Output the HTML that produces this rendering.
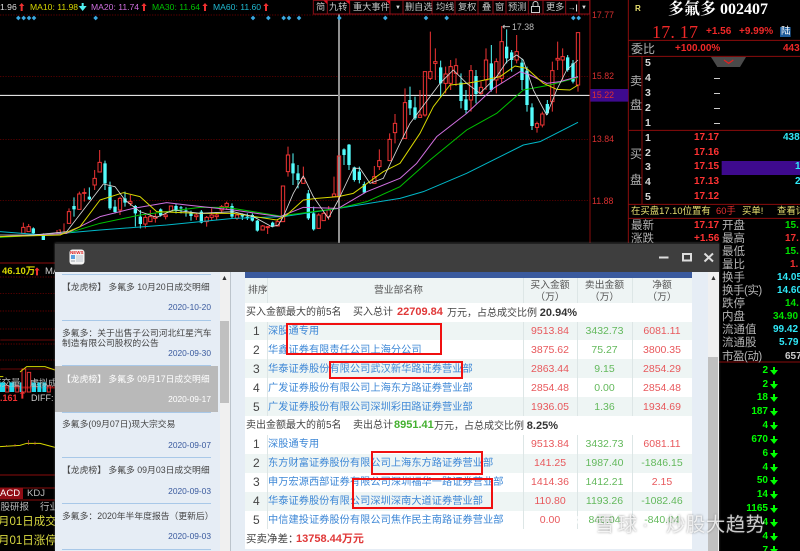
<!DOCTYPE html>
<html><head><meta charset="utf-8"><style>
html,body{margin:0;padding:0;background:#000}
#p{position:relative;width:800px;height:551px;overflow:hidden;background:#000;font-family:"Liberation Sans","Noto Sans CJK SC",sans-serif;font-size:11px}
.a{position:absolute;white-space:nowrap;line-height:1}
.b{position:absolute}
.l{color:#b4b4b4;font-size:11.5px}
.tb{color:#c8c8c8;font-size:9.2px;top:3px}
.ma{font-size:8.6px;top:3px}
.ax{left:592px;color:#d83030;font-size:8.8px}
.bk{color:#ff3333;font-size:10px;font-weight:bold;left:694px}
.n{color:#d8d8d8;font-size:10.5px;font-weight:bold;left:645px}
.g{color:#00ff00;font-size:10px;font-weight:bold;text-align:right;left:720px;width:48px}
.ti{font-size:8.8px;color:#444}
.d{font-size:8.4px;color:#3a5a9e;left:130px;width:81px;text-align:right}
.m{font-size:10.2px;letter-spacing:.05px;color:#3d87d6;left:268px}
.r{font-size:12px;color:#444;left:253px}
.v{font-size:10.5px;text-align:center}
.bu{color:#e8585c;left:523px;width:54px}
.se{color:#63b95c;left:577px;width:55px}
.ne{color:#e8585c;left:632px;width:60px}
.row{position:absolute;left:245px;width:447px}
.box{position:absolute;border:2px solid #f01010;box-sizing:border-box}
.h{font-size:9.8px;color:#555;text-align:center}
.wm{color:rgba(255,255,255,.78);text-shadow:0 0 2px rgba(70,70,70,.6);font-size:19.5px;top:516px}
</style></head><body><div id="p">

<svg class="b" style="left:0;top:0" width="800" height="551" viewBox="0 0 2400 1653" fill="none">
<defs>
<path id="up" d="M0 -12l8 9h-5v15h-6v-15h-5z"/>
<path id="dn" d="M-3 -12h6v9h9l-12 15-12-15h9z"/>
</defs>
<g stroke="#7a0000" stroke-width="2" stroke-dasharray="4 4">
<path d="M0 45H1770M0 229H1770M0 418H1770M0 602H1770"/>
<path d="M0 831H165M0 880H165M0 933H165M0 987H165M0 1032H165M0 1080H165"/>
</g>
<path d="M0 286H1770" stroke="#fff" stroke-width="3"/>
<path d="M1017 42V760" stroke="#909090" stroke-width="6"/>
<!-- red wicks and bodies -->
<path stroke="#f03434" stroke-width="3" d="M70 668V682M65 682H75V700H65ZM86 672V680M81 680H91V695H81ZM176 690H181V705H171V690M192 670V700M207 625V635M202 635H212V670H202ZM238 575V582M233 582H243V628H233ZM253 565V578M248 578H258V580H248ZM253 580V605M284 510V535M279 535H289V555H279ZM284 555V570M299 450V487M294 487H304V516H294ZM360 590V595M355 595H365V630H355ZM360 630V645M391 585V605M386 605H396V610H386ZM391 610V618M436 645V652M431 652H441V672H431ZM436 672V685M451 630V650M446 650H456V665H446ZM466 640V650M461 650H471V655H461ZM466 655V668M497 640V645M492 645H502V650H492ZM497 650V658M513 618H518V636H508V618ZM589 640V645M584 645H594V650H584ZM589 650V660M620 648V652M615 652H625V665H615ZM620 665V680M635 625V645M630 645H640V652H630ZM635 652V660M650 640V645M645 645H655V650H645ZM650 650V660M665 615V620M660 620H670V630H660ZM665 630V640M680 605V610M675 610H685V620H675ZM680 620V630M711 640V645M706 645H716V655H706ZM711 655V660M788 675V678M783 678H793V690H783ZM803 678V680M798 680H808V683H798ZM803 683V702M833 660V665M828 665H838V678H828ZM844 558H854V665H844ZM864 440V465M859 465H869V515H859ZM864 515V530M910 500V535M905 535H915V550H905ZM956 640V645M951 645H961V685H951ZM971 635V640M966 640H976V662H966ZM986 618V630M981 630H991V650H981ZM986 650V660M1002 530V582M997 582H1007V590H997ZM1012 468H1022V590H1012ZM1017 590V600M1123 498V530M1118 530H1128V550H1118ZM1138 448V482M1133 482H1143V500H1133ZM1138 500V510M1169 400V418M1164 418H1174V482H1164ZM1185 342V370M1180 370H1190V398H1180ZM1185 398V430M1215 265V308M1210 308H1220V415H1210ZM1260 270V345M1255 345H1265V352H1255ZM1275 215H1280V345H1270V215ZM1275 345V350M1291 95V215M1286 215H1296V235H1286ZM1291 235V240M1306 145V185M1301 185H1311V190H1301ZM1306 190V240M1337 200V222M1332 222H1342V250H1332ZM1337 250V280M1352 180V200M1347 200H1357V250H1347ZM1352 250V270M1368 175V197M1363 197H1373V220H1363ZM1368 220V258M1413 195V212M1408 212H1418V300H1408ZM1413 300V335M1443 245V262M1438 262H1448V280H1438ZM1443 280V285M1458 145V180M1453 180H1463V240H1453ZM1458 240V270M1489 175V185M1484 185H1494V240H1484ZM1489 240V280M1505 78V125M1500 125H1510V235H1500ZM1505 235V250M1550 105V155M1545 155H1555V180H1545ZM1550 180V190M1611 365V371M1606 371H1616V382H1606ZM1611 382V398M1627 335V342M1622 342H1632V375H1622ZM1627 375V382M1657 185V212M1652 212H1662V305H1652ZM1657 305V335M1673 125V175M1668 175H1678V180H1668ZM1673 180V210M1688 145V170M1683 170H1693V180H1683ZM1688 180V240M1729 98H1739V255H1729ZM1734 255V275"/>
<!-- cyan wicks -->
<path stroke="#54fcfc" stroke-width="3" d="M100 682V705M130 700V720M222 592V650M268 562V600M315 482V570M330 545V630M345 600V640M375 575V620M406 615V680M421 630V685M482 625V650M528 612V640M543 618V640M558 622V650M573 632V662M604 630V670M696 610V655M727 640V660M742 640V660M757 640V665M772 660V695M818 665V682M879 460V555M894 495V565M925 570V660M941 620V692M1032 445V495M1047 432V510M1063 500V545M1078 500V550M1093 545V580M1230 260V345M1245 290V360M1322 182V290M1383 220V325M1398 270V340M1428 210V310M1474 135V275M1520 88V190M1535 150V215M1566 175V270M1581 200V335M1596 310V390M1642 300V345M1703 165V215M1719 180V250"/>
<path fill="#54fcfc" d="M95 685h10v15h-10zM125 705h10v15h-10zM217 618h10v10h-10zM263 590h10v8h-10zM310 490h10v60h-10zM325 560h10v65h-10zM340 620h10v16h-10zM370 595h10v13h-10zM401 618h10v22h-10zM416 650h10v22h-10zM477 628h10v18h-10zM523 618h10v12h-10zM538 622h10v3h-10zM553 630h10v2h-10zM568 640h10v8h-10zM599 635h10v33h-10zM691 618h10v32h-10zM722 645h10v5h-10zM737 650h10v5h-10zM752 645h10v17h-10zM767 662h10v30h-10zM813 668h10v12h-10zM874 490h10v30h-10zM889 520h10v20h-10zM920 580h10v75h-10zM936 640h10v48h-10zM1027 448h10v17h-10zM1042 434h10v61h-10zM1058 502h10v38h-10zM1073 515h10v25h-10zM1088 552h10v26h-10zM1225 300h10v25h-10zM1240 322h10v33h-10zM1317 202h10v48h-10zM1378 248h10v55h-10zM1393 298h10v32h-10zM1423 228h10v54h-10zM1469 190h10v80h-10zM1515 140h10v35h-10zM1530 157h10v23h-10zM1561 188h10v52h-10zM1576 212h10v103h-10zM1591 322h10v56h-10zM1637 312h10v28h-10zM1698 172h10v38h-10zM1714 190h10v55h-10z"/>
<!-- MA lines -->
<g stroke-width="3" stroke-linejoin="round" fill="none">
<path stroke="#00b8c8" d="M0 695L130 705 300 690 500 675 700 655 850 650 1015 625 1200 595 1270 575 1400 520 1570 435 1620 425 1734 367"/>
<path stroke="#00c000" d="M0 712L200 700 300 670 420 645 600 622 680 622 840 648 1015 625 1100 605 1200 560 1290 480 1400 390 1490 340 1570 270 1650 255 1734 232"/>
<path stroke="#d070e0" d="M0 710L200 700 300 650 400 625 500 608 560 615 700 630 840 650 910 622 1015 625 1100 575 1200 535 1250 490 1310 410 1400 340 1480 265 1560 215 1590 225 1640 250 1680 245 1734 230"/>
<path stroke="#d8d800" d="M0 710L180 705 240 680 300 600 370 578 420 590 470 635 600 640 700 640 830 660 860 645 910 600 950 595 1015 590 1060 580 1150 515 1200 490 1260 400 1300 320 1350 255 1400 250 1440 243 1500 230 1545 198 1580 205 1630 250 1670 268 1710 270 1734 255"/>
<path stroke="#d8d8d8" stroke-width="2.5" d="M0 705L100 705 200 695 250 630 310 552 345 560 375 600 420 635 470 652 520 630 600 640 700 635 760 650 815 680 835 675 850 650 880 580 910 528 940 590 985 655 1015 600 1060 505 1080 505 1110 550 1150 535 1200 430 1230 370 1275 310 1320 250 1360 210 1400 250 1440 280 1490 230 1520 185 1550 165 1570 180 1600 270 1640 345 1670 270 1700 210 1734 180"/>
</g>
<!-- diamonds -->
<path fill="#3aa8e0" d="M55 47l7 7-7 7-7-7zM71 47l7 7-7 7-7-7zM87 47l7 7-7 7-7-7zM102 47l7 7-7 7-7-7zM287 47l7 7-7 7-7-7zM759 47l7 7-7 7-7-7zM805 47l7 7-7 7-7-7zM851 47l7 7-7 7-7-7zM867 47l7 7-7 7-7-7zM897 47l7 7-7 7-7-7zM1018 47l7 7-7 7-7-7zM1156 47l7 7-7 7-7-7zM1278 47l7 7-7 7-7-7zM1340 47l7 7-7 7-7-7zM1720 47l7 7-7 7-7-7zM1736 47l7 7-7 7-7-7z"/>
<!-- top arrows -->
<g fill="#f03030"><use href="#up" x="65" y="21"/><use href="#up" x="432" y="21"/><use href="#up" x="615" y="21"/><use href="#up" x="798" y="21"/><use href="#up" x="111" y="814"/><use href="#up" x="67" y="1184"/></g>
<use href="#dn" x="248" y="21" fill="#50f0f0"/>
<!-- 17.38 marker -->
<path stroke="#bbb" stroke-width="3" d="M1508 80H1530M1508 80l6-5M1508 80l6 5"/>
<!-- axis and panel lines -->
<g stroke="#8a0c0c" stroke-width="3">
<path d="M1770 0V730M1885 0V1653"/>
<path d="M1885 121H2400M1885 169H2400M1885 391H2400M1885 613H2400M1885 655H2400M1926 170V612"/>
<path d="M0 789H165M0 1161H165M0 1164H165M0 1425H165M0 1464H165M0 1500H165M1890 1086H2400"/>
</g>
<path stroke="#8a0c0c" stroke-width="2" d="M1 1107H165M1 1020H165"/>
<!-- toolbar borders -->
<path stroke="#8a1018" stroke-width="3" d="M940 1H1769V42H940ZM982 1V42M1049 1V42M1170 1V42M1209 1V42M1296 1V42M1365 1V42M1434 1V42M1479 1V42M1518 1V42M1585 1V42M1629 1V42M1697 1V42M1737 1V42"/>
<path fill="#e01020" d="M970 1h12v12zM1035 1h14v12zM1157 1h13v12z"/>
<!-- lower-left bits -->
<g stroke="#e03030" stroke-width="3"><path d="M17 1157h9v19h-9zM47 1157h9v19h-9zM66 1107h11v69h-11zM82 1117h10v59h-10zM142 1157h9v19h-9z"/></g>
<path fill="#20d8ec" d="M0 1147h15v29H0zM28 1147h15v29H28zM59 1147h5v29h-5zM95 1147h13v29H95zM112 1147h12v29h-12zM127 1147h12v29h-12z"/>
<path stroke="#d8d800" stroke-width="3" d="M60 1116L80 1100 135 1100 165 1110M0 1130H10M0 1340L60 1336 80 1330 120 1330 165 1342"/>
<path stroke="#c85050" stroke-width="2" d="M20 1340V1335M45 1340V1332M85 1335V1320M105 1335V1325"/>
<path fill="#900c14" d="M0 1464h69v33H0z"/>
<!-- right panel purple -->
<path fill="#3e0a8e" d="M1771 267h114v38h-114zM2165 483h235v42h-235z"/>
<path fill="#4a4a4a" d="M2133 171h105l-18 30h-68z"/>
<path stroke="#e02020" stroke-width="4" fill="none" d="M2172 180l14 10 14-10"/>
<path fill="#1c5a98" d="M2340 81h32v30h-32z"/>
<!-- green down arrows -->
<g fill="#00ff00"><use href="#dn" x="2322" y="1113"/><use href="#dn" x="2322" y="1155"/><use href="#dn" x="2322" y="1194"/><use href="#dn" x="2322" y="1236"/><use href="#dn" x="2322" y="1278"/><use href="#dn" x="2322" y="1320"/><use href="#dn" x="2322" y="1362"/><use href="#dn" x="2322" y="1404"/><use href="#dn" x="2322" y="1443"/><use href="#dn" x="2322" y="1485"/><use href="#dn" x="2322" y="1527"/><use href="#dn" x="2322" y="1569"/><use href="#dn" x="2322" y="1611"/><use href="#dn" x="2322" y="1650"/></g>
</svg>

<!-- top MA text -->
<span class="a ma" style="left:0;color:#ddd">1.96</span>
<span class="a ma" style="left:30px;color:#d8d800">MA10: 11.98</span>
<span class="a ma" style="left:91px;color:#d070e0">MA20: 11.74</span>
<span class="a ma" style="left:152px;color:#00c000">MA30: 11.64</span>
<span class="a ma" style="left:213px;color:#20b8d0">MA60: 11.60</span>
<span class="a" style="left:512px;top:23px;color:#bbb;font-size:8.8px">17.38</span>

<!-- toolbar -->
<span class="a tb" style="left:316px">简</span><span class="a tb" style="left:329px">九转</span><span class="a tb" style="left:353px">重大事件</span>
<span class="a" style="left:395px;top:5px;color:#ddd;font-size:6px">▼</span>
<span class="a tb" style="left:405px">删自选</span><span class="a tb" style="left:436px">均线</span><span class="a tb" style="left:458px">复权</span>
<span class="a tb" style="left:482px">叠</span><span class="a tb" style="left:495px">窗</span><span class="a tb" style="left:508px">预测</span>
<span class="a tb" style="left:546px">更多</span>
<svg class="b" style="left:530px;top:1px" width="12" height="12" fill="none" stroke="#ccc" stroke-width="1"><rect x="1.5" y="5.5" width="8" height="6"/><path d="M3 5V3a2.500 2.500 0 0 1 5 0v2"/></svg>
<span class="a" style="left:568px;top:4px;color:#eee;font-size:7.5px;font-weight:bold">→|</span>
<span class="a" style="left:581px;top:5px;color:#ddd;font-size:6px">▼</span>

<!-- axis labels -->
<span class="a ax" style="top:11px">17.77</span>
<span class="a ax" style="top:72px">15.82</span>
<span class="a ax" style="top:91px;color:#e03030">15.22</span>
<span class="a ax" style="top:135px">13.84</span>
<span class="a ax" style="top:197px">11.88</span>

<!-- right panel -->
<span class="a" style="left:635px;top:5px;color:#e8e070;font-size:8px;font-weight:bold">R</span>
<span class="a" style="left:668px;top:2px;color:#fff;font-size:16px;font-family:'Liberation Serif','Noto Serif CJK SC',serif;font-weight:bold">多氟多 002407</span>
<span class="a" style="left:652px;top:23px;color:#f02828;font-size:18px;font-family:'Liberation Serif',serif;letter-spacing:.2px">17. 17</span>
<span class="a" style="left:706px;top:27px;color:#f02828;font-size:10px;font-weight:bold">+1.56</span>
<span class="a" style="left:739px;top:27px;color:#f02828;font-size:10px;font-weight:bold">+9.99%</span>
<span class="a" style="left:781px;top:27px;color:#fff;font-size:9.500px">陆</span>
<span class="a l" style="left:631px;top:43px;font-size:12px">委比</span>
<span class="a" style="left:675px;top:44px;color:#f02828;font-size:10px;font-weight:bold">+100.00%</span>
<span class="a" style="left:783px;top:44px;color:#f02828;font-size:10px;font-weight:bold">443</span>
<span class="a l" style="left:630px;top:75px;font-size:12px">卖</span><span class="a l" style="left:630px;top:99px;font-size:12px">盘</span>
<span class="a l" style="left:630px;top:148px;font-size:12px">买</span><span class="a l" style="left:630px;top:174px;font-size:12px">盘</span>
<span class="a n" style="top:58px">5</span><span class="a n" style="top:73px">4</span><span class="a n" style="top:88px">3</span><span class="a n" style="top:103px">2</span><span class="a n" style="top:118px">1</span>
<span class="a n" style="top:133px">1</span><span class="a n" style="top:148px">2</span><span class="a n" style="top:162px">3</span><span class="a n" style="top:177px">4</span><span class="a n" style="top:192px">5</span>
<span class="b" style="left:714px;top:78px;width:6px;height:1px;background:#ccc"></span><span class="b" style="left:714px;top:93px;width:6px;height:1px;background:#ccc"></span><span class="b" style="left:714px;top:108px;width:6px;height:1px;background:#ccc"></span><span class="b" style="left:714px;top:123px;width:6px;height:1px;background:#ccc"></span>
<span class="a bk" style="top:133px">17.17</span><span class="a bk" style="top:148px">17.16</span><span class="a bk" style="top:162px">17.15</span><span class="a bk" style="top:177px">17.13</span><span class="a bk" style="top:192px">17.12</span>
<span class="a" style="left:783px;top:133px;color:#30e8f8;font-size:10px;font-weight:bold">438</span>
<span class="a" style="left:795px;top:162px;color:#30e8f8;font-size:10px;font-weight:bold">1</span>
<span class="a" style="left:795px;top:177px;color:#30e8f8;font-size:10px;font-weight:bold">2</span>
<span class="a" style="left:631px;top:206px;color:#e8e070;font-size:9.4px">在买盘17.10位置有</span>
<span class="a" style="left:716px;top:206px;color:#e83030;font-size:9.4px">60手</span>
<span class="a" style="left:742px;top:206px;color:#e8e070;font-size:9.4px">买单!</span>
<span class="a" style="left:777px;top:206px;color:#e8e070;font-size:9.4px">查看详</span>
<span class="a l" style="left:631px;top:221px">最新</span><span class="a bk" style="top:221px">17.17</span><span class="a l" style="left:722px;top:221px">开盘</span><span class="a" style="left:785px;top:221px;color:#00e000;font-size:10px;font-weight:bold">15.</span>
<span class="a l" style="left:631px;top:234px">涨跌</span><span class="a bk" style="top:234px">+1.56</span><span class="a l" style="left:722px;top:234px">最高</span><span class="a" style="left:785px;top:234px;color:#f03030;font-size:10px;font-weight:bold">17.</span>
<span class="a l" style="left:722px;top:247px">最低</span><span class="a" style="left:785px;top:247px;color:#00e000;font-size:10px;font-weight:bold">15.</span>
<span class="a l" style="left:722px;top:260px">量比</span><span class="a" style="left:790px;top:260px;color:#f03030;font-size:10px;font-weight:bold">1.</span>
<span class="a l" style="left:722px;top:273px">换手</span><span class="a" style="left:777px;top:273px;color:#30e8f8;font-size:10px;font-weight:bold">14.05</span>
<span class="a l" style="left:722px;top:286px;letter-spacing:-.5px">换手(实)</span><span class="a" style="left:777px;top:286px;color:#30e8f8;font-size:10px;font-weight:bold">14.60</span>
<span class="a l" style="left:722px;top:299px">跌停</span><span class="a" style="left:785px;top:299px;color:#00e000;font-size:10px;font-weight:bold">14.</span>
<span class="a l" style="left:722px;top:312px">内盘</span><span class="a" style="left:773px;top:312px;color:#00e000;font-size:10px;font-weight:bold">34.90</span>
<span class="a l" style="left:722px;top:325px">流通值</span><span class="a" style="left:773px;top:325px;color:#30e8f8;font-size:10px;font-weight:bold">99.42</span>
<span class="a l" style="left:722px;top:338px">流通股</span><span class="a" style="left:779px;top:338px;color:#30e8f8;font-size:10px;font-weight:bold">5.79</span>
<span class="a l" style="left:722px;top:352px;letter-spacing:-.5px">市盈(动)</span><span class="a" style="left:785px;top:352px;color:#ccc;font-size:10px;font-weight:bold">657</span>
<span class="a g" style="top:366px">2</span><span class="a g" style="top:380px">2</span><span class="a g" style="top:393px">18</span><span class="a g" style="top:407px">187</span><span class="a g" style="top:421px">4</span><span class="a g" style="top:435px">670</span><span class="a g" style="top:449px">6</span><span class="a g" style="top:463px">4</span><span class="a g" style="top:476px">50</span><span class="a g" style="top:490px">14</span><span class="a g" style="top:504px">1165</span><span class="a g" style="top:518px">4</span><span class="a g" style="top:532px">4</span><span class="a g" style="top:546px">7</span>

<!-- lower-left -->
<span class="a" style="left:2px;top:267px;color:#d8d800;font-size:9.5px;font-weight:bold">46.10万</span>
<span class="a" style="left:45px;top:267px;color:#ccc;font-size:9.5px">MA</span>
<span class="a" style="left:-8px;top:379px;color:#bbb;font-size:9.5px">成交量</span>
<span class="a" style="left:30px;top:379px;color:#bbb;font-size:9px">虚拟成</span>
<span class="a" style="left:0;top:394px;color:#f03030;font-size:9px;font-weight:bold">.161</span>
<span class="a" style="left:31px;top:394px;color:#ccc;font-size:9px">DIFF:</span>
<span class="a" style="left:0;top:489px;color:#fff;font-size:9.5px">ACD</span>
<span class="a" style="left:27px;top:489px;color:#bbb;font-size:9.5px">KDJ</span>
<span class="a" style="left:-9px;top:503px;color:#bbb;font-size:9.5px">个股研报</span>
<span class="a" style="left:40px;top:503px;color:#bbb;font-size:9.5px">行业</span>
<span class="a" style="left:-2px;top:517px;color:#d8d840;font-size:11.500px">月01日成交明</span>
<span class="a" style="left:-2px;top:536px;color:#d8d840;font-size:11.500px">月01日涨停分</span>

<!-- modal -->
<div class="b" style="left:55px;top:243px;width:664px;height:308px;background:#e6edf5;box-shadow:0 0 2px #555"></div>
<div class="b" style="left:55px;top:243px;width:664px;height:29px;background:#3e3e3e;border-top:1px solid #222;box-sizing:border-box"></div>
<svg class="b" style="left:69px;top:249px" width="17" height="16"><rect x=".5" y=".5" width="15" height="15" rx="3" fill="#f4f4f4"/><rect x="2" y="6" width="4" height="4" fill="#5aa0e0"/><rect x="7" y="6" width="7" height="7" fill="#d8dce0"/><rect x="2" y="11" width="4" height="2" fill="#c8ccd0"/><text x="1" y="5" font-size="4.500" font-weight="bold" fill="#e02020" font-family="Liberation Sans">NEWS</text></svg>
<svg class="b" style="left:655px;top:249px" width="64" height="16" stroke="#ddd" fill="none" stroke-width="2"><path d="M4 8.500H13.500"/><rect x="28" y="5" width="8" height="6.500"/><path d="M49.500 4.500L58 12.500M58 4.500L49.500 12.500"/></svg>
<!-- news list -->
<div class="b" style="left:55px;top:366px;width:163px;height:46px;background:#b9b9b9"></div>
<div class="b" style="left:220px;top:272px;width:10px;height:279px;background:#f0f0f0;border-right:1px solid #bcc4cc"></div>
<div class="b" style="left:220px;top:321px;width:9px;height:82px;background:#c0c0c0"></div>
<span class="a" style="left:221px;top:275px;color:#333;font-size:7px">▲</span>
<div class="b" style="left:62px;top:274px;width:149px;height:1px;background:#a8c8e8"></div>
<div class="b" style="left:62px;top:320px;width:149px;height:1px;background:#a8c8e8"></div>
<div class="b" style="left:62px;top:365px;width:149px;height:1px;background:#a8c8e8"></div>
<div class="b" style="left:62px;top:412px;width:149px;height:1px;background:#a8c8e8"></div>
<div class="b" style="left:62px;top:457px;width:149px;height:1px;background:#a8c8e8"></div>
<div class="b" style="left:62px;top:503px;width:149px;height:1px;background:#a8c8e8"></div>
<div class="b" style="left:62px;top:549px;width:149px;height:1px;background:#a8c8e8"></div>
<span class="a ti" style="left:62px;top:283px">【龙虎榜】 多氟多 10月20日成交明细</span><span class="a d" style="top:303px">2020-10-20</span>
<span class="a ti" style="left:62px;top:329px">多氟多：关于出售子公司河北红星汽车</span><span class="a ti" style="left:62px;top:339px">制造有限公司股权的公告</span><span class="a d" style="top:349px">2020-09-30</span>
<span class="a ti" style="left:62px;top:375px;color:#fff">【龙虎榜】 多氟多 09月17日成交明细</span><span class="a d" style="top:395px;color:#fff">2020-09-17</span>
<span class="a ti" style="left:62px;top:420px">多氟多(09月07日)现大宗交易</span><span class="a d" style="top:441px">2020-09-07</span>
<span class="a ti" style="left:62px;top:466px">【龙虎榜】 多氟多 09月03日成交明细</span><span class="a d" style="top:487px">2020-09-03</span>
<span class="a ti" style="left:62px;top:512px">多氟多：2020年半年度报告（更新后）</span><span class="a d" style="top:532px">2020-09-03</span>

<!-- table -->
<div class="b" style="left:245px;top:272px;width:447px;height:279px;background:#fff"></div>
<div class="b" style="left:245px;top:272px;width:447px;height:6px;background:#3a5a9e"></div>
<div class="row" style="top:278px;height:25px;background:#eef4f4"></div>
<div class="row" style="top:322px;height:18px;background:#eef5f4"></div>
<div class="row" style="top:359px;height:19px;background:#eef5f4"></div>
<div class="row" style="top:397px;height:19px;background:#eef5f4"></div>
<div class="row" style="top:454px;height:19px;background:#eef5f4"></div>
<div class="row" style="top:492px;height:19px;background:#eef5f4"></div>
<div class="b" style="left:245px;top:549px;width:463px;height:2px;background:#e6edf5"></div>
<div class="b" style="left:267px;top:278px;width:1px;height:25px;background:#dde6e6"></div><div class="b" style="left:267px;top:322px;width:1px;height:94px;background:#dde6e6"></div><div class="b" style="left:267px;top:435px;width:1px;height:94px;background:#dde6e6"></div>
<div class="b" style="left:523px;top:278px;width:1px;height:25px;background:#dde6e6"></div><div class="b" style="left:577px;top:278px;width:1px;height:25px;background:#dde6e6"></div><div class="b" style="left:632px;top:278px;width:1px;height:25px;background:#dde6e6"></div>
<div class="b" style="left:523px;top:322px;width:1px;height:94px;background:#dde6e6"></div><div class="b" style="left:577px;top:322px;width:1px;height:94px;background:#dde6e6"></div><div class="b" style="left:632px;top:322px;width:1px;height:94px;background:#dde6e6"></div>
<div class="b" style="left:523px;top:435px;width:1px;height:94px;background:#dde6e6"></div><div class="b" style="left:577px;top:435px;width:1px;height:94px;background:#dde6e6"></div><div class="b" style="left:632px;top:435px;width:1px;height:94px;background:#dde6e6"></div>
<span class="a h" style="left:248px;top:286px">排序</span><span class="a h" style="left:374px;top:286px">营业部名称</span>
<span class="a h" style="left:523px;top:281px;width:54px">买入金额</span><span class="a h" style="left:523px;top:293px;width:54px">（万）</span>
<span class="a h" style="left:577px;top:281px;width:55px">卖出金额</span><span class="a h" style="left:577px;top:293px;width:55px">（万）</span>
<span class="a h" style="left:632px;top:281px;width:60px">净额</span><span class="a h" style="left:632px;top:293px;width:60px">（万）</span>
<span class="a" style="left:246px;top:308px;font-size:10px;color:#444">买入金额最大的前5名</span>
<span class="a" style="left:353px;top:308px;font-size:10px;color:#444">买入总计</span>
<span class="a" style="left:397px;top:307px;font-size:11px;font-weight:bold;color:#e03838">22709.84</span>
<span class="a" style="left:447px;top:308px;font-size:10px;color:#444">万元，占总成交比例 <b style="font-size:11px;color:#333">20.94%</b></span>
<span class="a" style="left:246px;top:421px;font-size:10px;color:#444">卖出金额最大的前5名</span>
<span class="a" style="left:353px;top:421px;font-size:10px;color:#444">卖出总计</span>
<span class="a" style="left:394px;top:420px;font-size:11px;font-weight:bold;color:#44b030">8951.41</span>
<span class="a" style="left:434px;top:421px;font-size:10px;color:#444">万元，占总成交比例 <b style="font-size:11px;color:#333">8.25%</b></span>
<span class="a" style="left:246px;top:534px;font-size:10.500px;color:#444">买卖净差：</span>
<span class="a" style="left:296px;top:534px;font-size:11px;font-weight:bold;color:#e03838">13758.44万元</span>

<span class="a r" style="top:325px">1</span><span class="a m" style="top:327px">深股通专用</span><span class="a v bu" style="top:326px">9513.84</span><span class="a v se" style="top:326px">3432.73</span><span class="a v ne" style="top:326px">6081.11</span>
<span class="a r" style="top:344px">2</span><span class="a m" style="top:346px">华鑫证券有限责任公司上海分公司</span><span class="a v bu" style="top:345px">3875.62</span><span class="a v se" style="top:345px">75.27</span><span class="a v ne" style="top:345px">3800.35</span>
<span class="a r" style="top:363px">3</span><span class="a m" style="top:365px">华泰证券股份有限公司武汉新华路证券营业部</span><span class="a v bu" style="top:364px">2863.44</span><span class="a v se" style="top:364px">9.15</span><span class="a v ne" style="top:364px">2854.29</span>
<span class="a r" style="top:382px">4</span><span class="a m" style="top:384px">广发证券股份有限公司上海东方路证券营业部</span><span class="a v bu" style="top:383px">2854.48</span><span class="a v se" style="top:383px">0.00</span><span class="a v ne" style="top:383px">2854.48</span>
<span class="a r" style="top:401px">5</span><span class="a m" style="top:403px">广发证券股份有限公司深圳彩田路证券营业部</span><span class="a v bu" style="top:402px">1936.05</span><span class="a v se" style="top:402px">1.36</span><span class="a v ne" style="top:402px">1934.69</span>
<span class="a r" style="top:438px">1</span><span class="a m" style="top:440px">深股通专用</span><span class="a v bu" style="top:439px">9513.84</span><span class="a v se" style="top:439px">3432.73</span><span class="a v ne" style="top:439px">6081.11</span>
<span class="a r" style="top:457px">2</span><span class="a m" style="top:459px">东方财富证券股份有限公司上海东方路证券营业部</span><span class="a v bu" style="top:458px">141.25</span><span class="a v se" style="top:458px">1987.40</span><span class="a v se" style="top:458px;left:632px;width:60px">-1846.15</span>
<span class="a r" style="top:476px">3</span><span class="a m" style="top:478px">申万宏源西部证券有限公司深圳福华一路证券营业部</span><span class="a v bu" style="top:477px">1414.36</span><span class="a v se" style="top:477px">1412.21</span><span class="a v ne" style="top:477px">2.15</span>
<span class="a r" style="top:495px">4</span><span class="a m" style="top:497px">华泰证券股份有限公司深圳深南大道证券营业部</span><span class="a v bu" style="top:496px">110.80</span><span class="a v se" style="top:496px">1193.26</span><span class="a v se" style="top:496px;left:632px;width:60px">-1082.46</span>
<span class="a r" style="top:514px">5</span><span class="a m" style="top:516px">中信建投证券股份有限公司焦作民主南路证券营业部</span><span class="a v bu" style="top:515px">0.00</span><span class="a v se" style="top:515px">840.04</span><span class="a v se" style="top:515px;left:632px;width:60px">-840.04</span>
<div class="box" style="left:286px;top:323px;width:156px;height:32px"></div>
<div class="box" style="left:329px;top:361px;width:134px;height:18px"></div>
<div class="box" style="left:371px;top:451px;width:112px;height:24px"></div>
<div class="box" style="left:352px;top:478px;width:141px;height:31px"></div>

<!-- right scrollbar -->
<div class="b" style="left:708px;top:272px;width:11px;height:279px;background:#f0f0f0"></div>
<div class="b" style="left:708px;top:357px;width:10px;height:194px;background:#c0c0c0"></div>
<span class="a" style="left:710px;top:275px;color:#333;font-size:7px">▲</span>

<!-- watermark -->
<svg class="b" style="left:559px;top:512px" width="28" height="30" fill="none" stroke="#fff" stroke-opacity=".8" stroke-width="2.500"><circle cx="14" cy="15" r="10.500"/><path d="M9 9L19 21M19 9L10 20"/></svg>
<span class="a wm" style="left:595px;letter-spacing:3px">雪球</span>
<span class="a wm" style="left:642px">·</span>
<span class="a wm" style="left:666px;letter-spacing:.4px">炒股大趋势</span>
</div></body></html>
